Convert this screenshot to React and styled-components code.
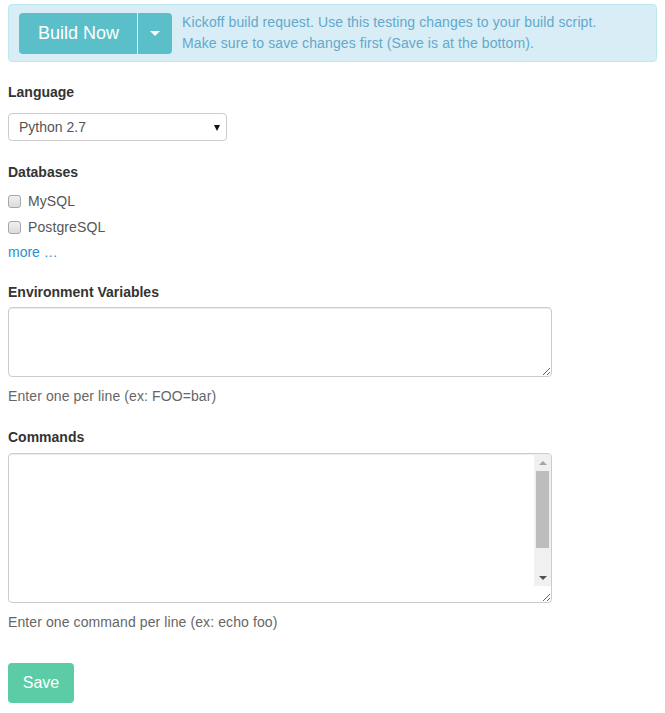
import React from "react";
import styled, {createGlobalStyle} from "styled-components";

const GlobalStyle = createGlobalStyle`
  body {
    margin: 0;
    background: #fff;
    font-family: "Liberation Sans", Arial, sans-serif;
    font-size: 14px;
    color: #333;
  }
`;

const Page = styled.div`
  padding: 4px 8px 10px 8px;
`;

const Alert = styled.div`
  display: flex;
  align-items: center;
  gap: 10px;
  box-sizing: border-box;
  height: 58px;
  padding: 0 10px;
  background: #d9edf7;
  border: 1px solid #bce8f1;
  border-radius: 4px;
`;

const BtnGroup = styled.div`
  display: flex;
  height: 41px;
`;

const BuildButton = styled.button`
  height: 41px;
  padding: 0 18px 0 19px;
  border: none;
  background: #5bbfc9;
  color: #fff;
  font-family: "Liberation Sans", Arial, sans-serif;
  font-size: 18px;
  border-radius: 4px 0 0 4px;
  border-right: 1px solid #e4f3f5;
`;

const CaretButton = styled.button`
  width: 34px;
  height: 41px;
  border: none;
  background: #5bbfc9;
  border-radius: 0 4px 4px 0;
  display: flex;
  align-items: center;
  justify-content: center;
  padding: 0;
`;

const Caret = styled.span`
  width: 0;
  height: 0;
  border-left: 5px solid transparent;
  border-right: 5px solid transparent;
  border-top: 5px solid #fff;
`;

const AlertText = styled.div`
  color: #62a9cb;
  line-height: 21px;
  letter-spacing: 0.1px;
`;

const Label = styled.div`
  font-weight: bold;
  line-height: 20px;
  margin-top: ${p => p.$top}px;
  margin-bottom: ${p => p.$bottom}px;
`;

const SelectBox = styled.div`
  position: relative;
  width: 219px;
  height: 28px;
  box-sizing: border-box;
  border: 1px solid #ccc;
  border-radius: 4px;
  background: #fff;
`;

const Select = styled.select`
  appearance: none;
  width: 100%;
  height: 100%;
  border: none;
  background: transparent;
  padding: 0 0 0 10px;
  font-family: "Liberation Sans", Arial, sans-serif;
  font-size: 14px;
  color: #555;
  outline: none;
`;

const SelectArrow = styled.span`
  position: absolute;
  right: 6px;
  top: 11px;
  width: 0;
  height: 0;
  border-left: 3.5px solid transparent;
  border-right: 3.5px solid transparent;
  border-top: 6px solid #111;
  pointer-events: none;
`;

const CheckRow = styled.label`
  display: flex;
  align-items: center;
  height: 26px;
  gap: 7px;
  color: #555;
  letter-spacing: 0.1px;
`;

const Check = styled.input`
  appearance: none;
  margin: 0;
  width: 13px;
  height: 13px;
  box-sizing: border-box;
  border: 1px solid #a6a6a6;
  border-radius: 3px;
  background: linear-gradient(#f0f0f0, #dcdcdc);
`;

const MoreLink = styled.a`
  display: block;
  line-height: 24px;
  color: #2a8fd0;
  text-decoration: none;
`;

const Field = styled.div`
  position: relative;
  width: 544px;
`;

const TextArea = styled.textarea`
  display: block;
  box-sizing: border-box;
  width: 544px;
  height: ${p => p.$height}px;
  margin: 0;
  border: 1px solid #ccc;
  border-radius: 4px;
  box-shadow: inset 0 1px 1px rgba(0, 0, 0, 0.075);
  font-family: "Liberation Sans", Arial, sans-serif;
  font-size: 14px;
  line-height: 20px;
  padding: 6px 12px;
  resize: vertical;
`;

const ScrollTrack = styled.div`
  position: absolute;
  top: 1px;
  right: 1px;
  bottom: 17px;
  width: 17px;
  background: #f0f0f0;
  display: flex;
  flex-direction: column;
  border-top-right-radius: 3px;
`;

const ScrollButton = styled.div`
  height: 17px;
  flex: none;
  display: flex;
  align-items: center;
  justify-content: center;
`;

const ArrowUp = styled.span`
  width: 0;
  height: 0;
  border-left: 4px solid transparent;
  border-right: 4px solid transparent;
  border-bottom: 4px solid #a3a3a3;
`;

const ArrowDown = styled.span`
  width: 0;
  height: 0;
  border-left: 4px solid transparent;
  border-right: 4px solid transparent;
  border-top: 4px solid #505050;
`;

const Thumb = styled.div`
  height: 77px;
  margin: 0 2px 0 2px;
  background: #bdbdbd;
  flex: none;
`;

const Spacer = styled.div`
  flex: 1;
`;

const Help = styled.div`
  color: #666;
  line-height: 20px;
  margin-top: 9px;
  letter-spacing: 0.1px;
`;

const SaveButton = styled.button`
  margin-top: 31px;
  width: 66px;
  height: 40px;
  border: none;
  border-radius: 4px;
  background: #5ccca6;
  color: #fff;
  font-family: "Liberation Sans", Arial, sans-serif;
  font-size: 16px;
  padding: 0;
`;

export default function App() {
  return (
    <>
      <GlobalStyle />
      <Page>
        <Alert>
          <BtnGroup>
            <BuildButton>Build Now</BuildButton>
            <CaretButton>
              <Caret />
            </CaretButton>
          </BtnGroup>
          <AlertText>
            Kickoff build request. Use this testing changes to your build script.
            <br />
            Make sure to save changes first (Save is at the bottom).
          </AlertText>
        </Alert>

        <Label $top={20} $bottom={11}>Language</Label>
        <SelectBox>
          <Select defaultValue="python27">
            <option value="python27">Python 2.7</option>
          </Select>
          <SelectArrow />
        </SelectBox>

        <Label $top={21} $bottom={6}>Databases</Label>
        <CheckRow>
          <Check type="checkbox" />
          MySQL
        </CheckRow>
        <CheckRow>
          <Check type="checkbox" />
          PostgreSQL
        </CheckRow>
        <MoreLink href="#">more …</MoreLink>

        <Label $top={18} $bottom={5}>Environment Variables</Label>
        <TextArea $height={70} />
        <Help>Enter one per line (ex: FOO=bar)</Help>

        <Label $top={21} $bottom={6}>Commands</Label>
        <Field>
          <TextArea $height={150} />
          <ScrollTrack>
            <ScrollButton>
              <ArrowUp />
            </ScrollButton>
            <Thumb />
            <Spacer />
            <ScrollButton>
              <ArrowDown />
            </ScrollButton>
          </ScrollTrack>
        </Field>
        <Help>Enter one command per line (ex: echo foo)</Help>

        <SaveButton>Save</SaveButton>
      </Page>
    </>
  );
}
